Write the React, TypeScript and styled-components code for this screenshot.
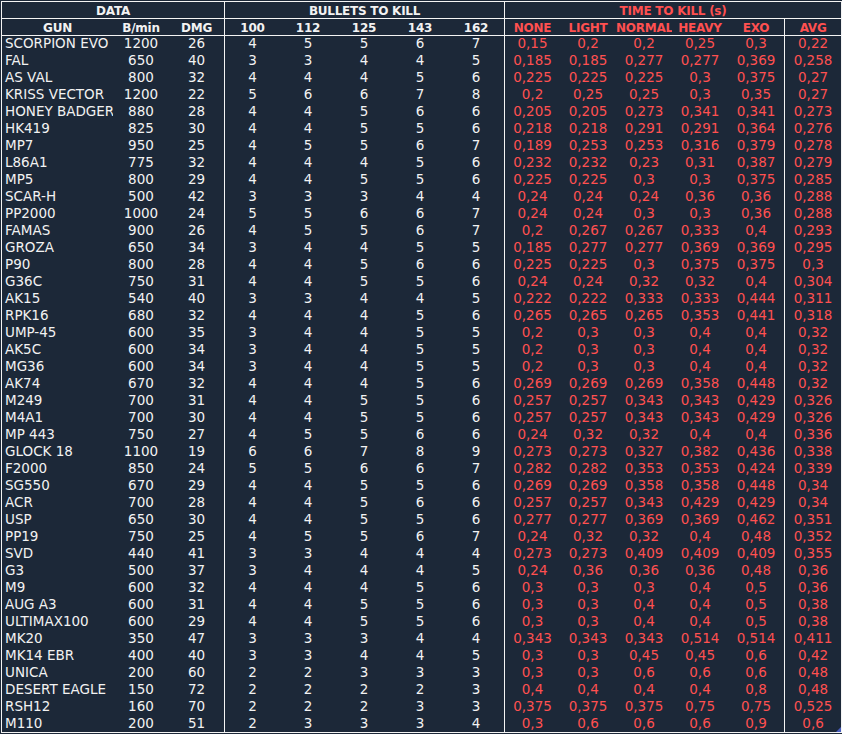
import styled, { createGlobalStyle } from "styled-components";

const GlobalStyle = createGlobalStyle`
  html, body {
    margin: 0;
    padding: 0;
    background: #1c2838;
  }
`

// gun, B/min, DMG, bullets (100-162), ttk (none-exo), avg
const rows: string[] = [
  "SCORPION EVO|1200|26|4 5 5 6 7|0,15 0,2 0,2 0,25 0,3|0,22",
  "FAL|650|40|3 3 4 4 5|0,185 0,185 0,277 0,277 0,369|0,258",
  "AS VAL|800|32|4 4 4 5 6|0,225 0,225 0,225 0,3 0,375|0,27",
  "KRISS VECTOR|1200|22|5 6 6 7 8|0,2 0,25 0,25 0,3 0,35|0,27",
  "HONEY BADGER|880|28|4 4 5 6 6|0,205 0,205 0,273 0,341 0,341|0,273",
  "HK419|825|30|4 4 5 5 6|0,218 0,218 0,291 0,291 0,364|0,276",
  "MP7|950|25|4 5 5 6 7|0,189 0,253 0,253 0,316 0,379|0,278",
  "L86A1|775|32|4 4 4 5 6|0,232 0,232 0,23 0,31 0,387|0,279",
  "MP5|800|29|4 4 5 5 6|0,225 0,225 0,3 0,3 0,375|0,285",
  "SCAR-H|500|42|3 3 3 4 4|0,24 0,24 0,24 0,36 0,36|0,288",
  "PP2000|1000|24|5 5 6 6 7|0,24 0,24 0,3 0,3 0,36|0,288",
  "FAMAS|900|26|4 5 5 6 7|0,2 0,267 0,267 0,333 0,4|0,293",
  "GROZA|650|34|3 4 4 5 5|0,185 0,277 0,277 0,369 0,369|0,295",
  "P90|800|28|4 4 5 6 6|0,225 0,225 0,3 0,375 0,375|0,3",
  "G36C|750|31|4 4 5 5 6|0,24 0,24 0,32 0,32 0,4|0,304",
  "AK15|540|40|3 3 4 4 5|0,222 0,222 0,333 0,333 0,444|0,311",
  "RPK16|680|32|4 4 4 5 6|0,265 0,265 0,265 0,353 0,441|0,318",
  "UMP-45|600|35|3 4 4 5 5|0,2 0,3 0,3 0,4 0,4|0,32",
  "AK5C|600|34|3 4 4 5 5|0,2 0,3 0,3 0,4 0,4|0,32",
  "MG36|600|34|3 4 4 5 5|0,2 0,3 0,3 0,4 0,4|0,32",
  "AK74|670|32|4 4 4 5 6|0,269 0,269 0,269 0,358 0,448|0,32",
  "M249|700|31|4 4 5 5 6|0,257 0,257 0,343 0,343 0,429|0,326",
  "M4A1|700|30|4 4 5 5 6|0,257 0,257 0,343 0,343 0,429|0,326",
  "MP 443|750|27|4 5 5 6 6|0,24 0,32 0,32 0,4 0,4|0,336",
  "GLOCK 18|1100|19|6 6 7 8 9|0,273 0,273 0,327 0,382 0,436|0,338",
  "F2000|850|24|5 5 6 6 7|0,282 0,282 0,353 0,353 0,424|0,339",
  "SG550|670|29|4 4 5 5 6|0,269 0,269 0,358 0,358 0,448|0,34",
  "ACR|700|28|4 4 5 6 6|0,257 0,257 0,343 0,429 0,429|0,34",
  "USP|650|30|4 4 5 5 6|0,277 0,277 0,369 0,369 0,462|0,351",
  "PP19|750|25|4 5 5 6 7|0,24 0,32 0,32 0,4 0,48|0,352",
  "SVD|440|41|3 3 4 4 4|0,273 0,273 0,409 0,409 0,409|0,355",
  "G3|500|37|3 4 4 4 5|0,24 0,36 0,36 0,36 0,48|0,36",
  "M9|600|32|4 4 4 5 6|0,3 0,3 0,3 0,4 0,5|0,36",
  "AUG A3|600|31|4 4 5 5 6|0,3 0,3 0,4 0,4 0,5|0,38",
  "ULTIMAX100|600|29|4 4 5 5 6|0,3 0,3 0,4 0,4 0,5|0,38",
  "MK20|350|47|3 3 3 4 4|0,343 0,343 0,343 0,514 0,514|0,411",
  "MK14 EBR|400|40|3 3 4 4 5|0,3 0,3 0,45 0,45 0,6|0,42",
  "UNICA|200|60|2 2 3 3 3|0,3 0,3 0,6 0,6 0,6|0,48",
  "DESERT EAGLE|150|72|2 2 2 2 3|0,4 0,4 0,4 0,4 0,8|0,48",
  "RSH12|160|70|2 2 2 3 3|0,375 0,375 0,375 0,75 0,75|0,525",
  "M110|200|51|2 3 3 3 4|0,3 0,6 0,6 0,6 0,9|0,6",
]

const bulletHeads = ["100", "112", "125", "143", "162"]
const ttkHeads = ["NONE", "LIGHT", "NORMAL", "HEAVY", "EXO"]

export default function App() {
  return (
    <>
      <GlobalStyle />
      <StyledWrap>
        <StyledTable>
          <colgroup>
            <col width={111} />
            <col width={56} />
            <col width={55} />
            {[...bulletHeads, ...ttkHeads].map((h) => (
              <col key={h} width={56} />
            ))}
            <col width={57} />
          </colgroup>
          <thead>
            <tr>
              <StyledHead colSpan={3}>DATA</StyledHead>
              <StyledHead colSpan={5} $divider>BULLETS TO KILL</StyledHead>
              <StyledHead colSpan={6} $divider $red>TIME TO KILL (s)</StyledHead>
            </tr>
            <tr>
              <StyledHead>GUN</StyledHead>
              <StyledHead>B/min</StyledHead>
              <StyledHead>DMG</StyledHead>
              {bulletHeads.map((h, i) => (
                <StyledHead key={h} $divider={i === 0}>{h}</StyledHead>
              ))}
              {ttkHeads.map((h, i) => (
                <StyledHead key={h} $divider={i === 0} $red>{h}</StyledHead>
              ))}
              <StyledHead $divider $red>AVG</StyledHead>
            </tr>
          </thead>
          <tbody>
            {rows.map((row) => {
              const [gun, rate, dmg, bullets, ttk, avg] = row.split("|")
              return (
                <tr key={gun}>
                  <StyledGun>{gun}</StyledGun>
                  <StyledCell>{rate}</StyledCell>
                  <StyledCell>{dmg}</StyledCell>
                  {bullets.split(" ").map((b, i) => (
                    <StyledCell key={i} $divider={i === 0}>{b}</StyledCell>
                  ))}
                  {ttk.split(" ").map((t, i) => (
                    <StyledCell key={i} $divider={i === 0} $red>{t}</StyledCell>
                  ))}
                  <StyledCell $divider $red>{avg}</StyledCell>
                </tr>
              )
            })}
          </tbody>
        </StyledTable>
        <StyledCorner />
      </StyledWrap>
    </>
  )
}

const StyledWrap = styled.div`
  position: relative;
  width: 842px;
  height: 734px;
  padding: 1px 0 0 1px;
  box-sizing: border-box;
  overflow: hidden;
  background: #1c2838;
`

const StyledTable = styled.table`
  width: 841px;
  table-layout: fixed;
  border-collapse: separate;
  border-spacing: 0;
  border: 1px solid #f4f4f4;
  font-family: "DejaVu Sans", sans-serif;
  font-size: 13.5px;
  color: #f2f2f2;

  tbody tr:last-child td {
    height: 16px;
    padding-bottom: 2px;
  }
`

interface CellProps {
  $divider?: boolean
  $red?: boolean
}

const StyledCell = styled.td<CellProps>`
  height: 17px;
  padding: 0 0 3px;
  text-align: center;
  line-height: 14px;
  overflow: hidden;
  white-space: nowrap;
  box-sizing: border-box;
  border-left: ${(p) => (p.$divider ? "1px solid #f4f4f4" : "none")};
  color: ${(p) => (p.$red ? "#ff5050" : "#f2f2f2")};
`

const StyledGun = styled(StyledCell)`
  text-align: left;
  padding-left: 3px;
`

const StyledHead = styled.th<CellProps>`
  height: 17px;
  padding: 2px 0 0;
  text-align: center;
  line-height: 14px;
  font-size: 12px;
  letter-spacing: -0.25px;
  font-weight: 700;
  overflow: hidden;
  white-space: nowrap;
  box-sizing: border-box;
  border-bottom: 1px solid #f4f4f4;
  border-left: ${(p) => (p.$divider ? "1px solid #f4f4f4" : "none")};
  color: ${(p) => (p.$red ? "#ff5050" : "#f2f2f2")};
`

const StyledCorner = styled.div`
  position: absolute;
  right: 1px;
  bottom: 2px;
  width: 5px;
  height: 5px;
  background: #4a5fc0;
  clip-path: polygon(100% 0, 100% 100%, 0 100%);
`
